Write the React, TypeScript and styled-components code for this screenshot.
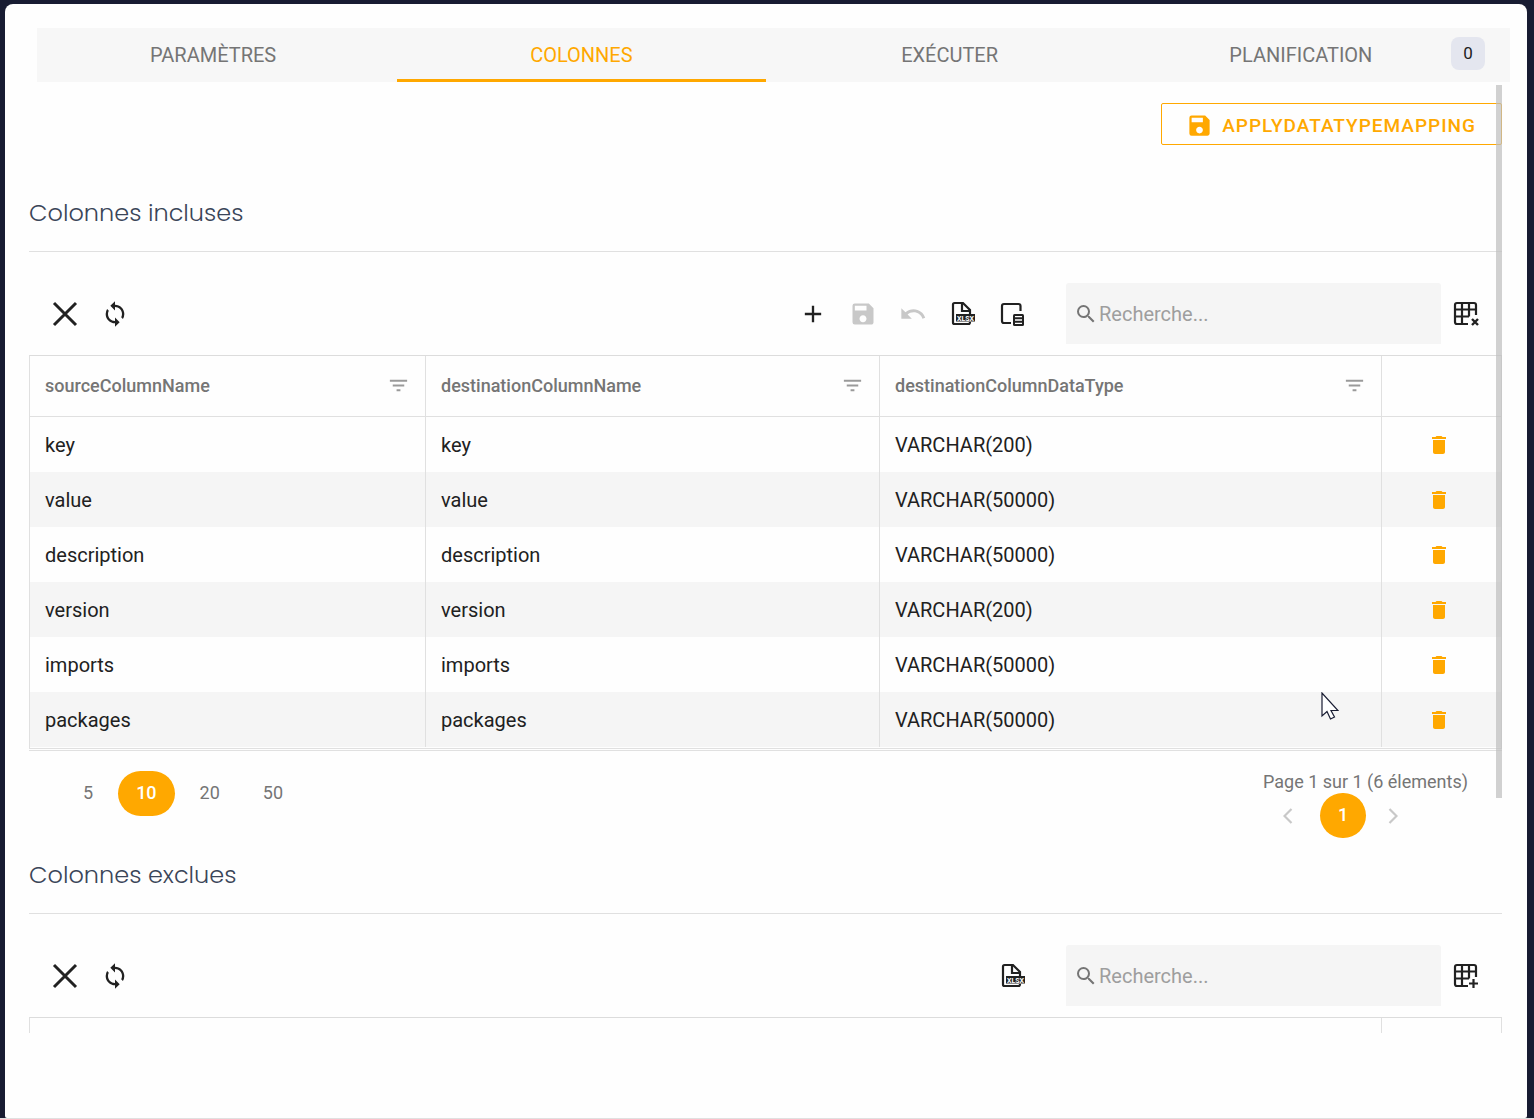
import React, { useState } from 'react';
import styled, { createGlobalStyle } from 'styled-components';
import { MdAdd, MdDelete, MdFilterList, MdSave, MdSearch, MdSync, MdUndo } from 'react-icons/md';

const ACCENT = '#ffa800';
const LINE = '#e0e0e0';
const GREY = '#757575';
const INK = '#212121';

const GlobalStyle = createGlobalStyle`
  * { box-sizing: border-box; }
  body {
    margin: 0;
    background: #181c32;
    color: ${INK};
    font-family: Roboto, "Liberation Sans", sans-serif;
    font-size: 20px;
  }
  button, input { font: inherit; color: inherit; }
  button { border: 0; padding: 0; background: none; cursor: pointer; }
`;

const Page = styled.div`
  height: 100vh;
  padding: 4px 7px 0 5px;
  border-bottom: 1px solid ${LINE};
`;

const Panel = styled.main`
  position: relative;
  height: 100%;
  display: flex;
  flex-direction: column;
  padding: 24px 25px 85px 24px;
  background: #fefefe;
  border-radius: 8px 8px 2px 2px;
`;

const TabBar = styled.div`
  flex: none;
  margin: 0 -8px 0 8px;
  background: #f7f7f7;
`;

const TabList = styled.div`
  display: grid;
  grid-template-columns: repeat(4, 1fr);
  margin: 0 8px 0 -8px;
`;

const Tab = styled.button<{ $active?: boolean; $badged?: boolean }>`
  position: relative;
  height: 54px;
  padding: 3px ${p => (p.$badged ? 34 : 0)}px 0 0;
  border-bottom: 3px solid ${p => (p.$active ? ACCENT : 'transparent')};
  color: ${p => (p.$active ? ACCENT : GREY)};
  font-size: 20px;
  text-transform: uppercase;
`;

const Badge = styled.span`
  position: absolute;
  top: 9px;
  right: 17px;
  width: 34px;
  height: 33px;
  border-radius: 8px;
  background: #e4e6ef;
  color: ${INK};
  font-size: 17px;
  line-height: 33px;
  text-align: center;
`;

const Viewport = styled.div`
  position: relative;
  flex: 1;
  min-height: 0;
`;

const Scroller = styled.div`
  height: 100%;
  overflow-y: auto;
  scrollbar-width: none;
`;

const Thumb = styled.div`
  position: absolute;
  top: 3px;
  right: 0;
  width: 6px;
  height: 75%;
  background: rgba(190, 190, 190, 0.7);
  pointer-events: none;
`;

const Actions = styled.div`
  display: flex;
  justify-content: flex-end;
  padding: 21px 0 31px;
`;

const ApplyButton = styled.button`
  display: flex;
  align-items: center;
  gap: 9px;
  height: 42px;
  padding: 2px 25px 0 24px;
  border: 1px solid ${ACCENT};
  border-radius: 2px;
  color: ${ACCENT};
  font-size: 19px;
  font-weight: 500;
  letter-spacing: 1px;
  text-transform: uppercase;
`;

const Title = styled.h2`
  margin: 0;
  padding: 21px 0 22px;
  border-bottom: 1px solid ${LINE};
  color: #3a4558;
  font-family: Poppins, Inter, sans-serif;
  font-size: 24px;
  font-weight: 300;
  line-height: 32px;
`;

const Toolbar = styled.div`
  display: flex;
  align-items: center;
  padding: 31px 11px 11px;
`;

const ToolGroup = styled.div<{ $end?: boolean }>`
  display: flex;
  margin-left: ${p => (p.$end ? 'auto' : 0)};
`;

const IconButton = styled.button`
  display: grid;
  place-items: center;
  width: 50px;
  height: 50px;
  color: ${INK};
  &:disabled { color: #c8c8c8; cursor: default; }
`;

const Search = styled.label`
  display: flex;
  align-items: center;
  gap: 1px;
  width: 375px;
  height: 61px;
  margin-left: 28px;
  padding: 0 8px;
  border-radius: 3px 3px 0 0;
  background: #f5f5f5;
  color: ${GREY};
`;

const SearchInput = styled.input`
  flex: 1;
  min-width: 0;
  padding: 0;
  border: 0;
  outline: 0;
  background: none;
  font-size: 20px;
  &::placeholder { color: #9e9e9e; opacity: 1; }
`;

const GridFrame = styled.div`
  padding-bottom: 1px;
  border: 1px solid ${LINE};
  border-top-color: #dcdcdc;
`;

const Table = styled.table`
  width: 100%;
  table-layout: fixed;
  border-collapse: separate;
  border-spacing: 0;
`;

const Col = styled.col<{ $width?: number }>`
  width: ${p => (p.$width ? `${p.$width}px` : 'auto')};
`;

const HeadCell = styled.th`
  height: 61px;
  padding: 0 15px 2px;
  border-bottom: 1px solid ${LINE};
  color: ${GREY};
  font-size: 18px;
  font-weight: 500;
  text-align: left;
  & + & { border-left: 1px solid ${LINE}; }
`;

const HeadContent = styled.div`
  display: flex;
  align-items: center;
  justify-content: space-between;
`;

const FilterButton = styled.button`
  display: grid;
  color: #9a9a9a;
`;

const Row = styled.tr`
  &:nth-child(even) { background: #f5f5f5; }
`;

const Cell = styled.td<{ $center?: boolean }>`
  height: 55px;
  padding: 0 ${p => (p.$center ? 21 : 15)}px 0 15px;
  font-size: 20px;
  & + & { border-left: 1px solid ${LINE}; }
`;

const DeleteButton = styled.button`
  display: grid;
  margin: 0 auto;
  color: ${ACCENT};
`;

const Pager = styled.div`
  display: flex;
  justify-content: space-between;
  align-items: flex-start;
  margin-top: 1px;
  padding: 20px 34px 0 36px;
  border-top: 1px solid ${LINE};
  color: ${GREY};
  font-size: 18px;
`;

const PageSizes = styled.div`
  display: flex;
  gap: 7px;
`;

const Pill = styled.button<{ $active?: boolean }>`
  min-width: 46px;
  height: 45px;
  padding: 0 18px 2px;
  border-radius: 23px;
  background: ${p => (p.$active ? ACCENT : 'transparent')};
  color: ${p => (p.$active ? '#fff' : GREY)};
  font-weight: ${p => (p.$active ? 500 : 400)};
`;

const PageInfo = styled.div`
  line-height: 22px;
`;

const PageNav = styled.nav`
  display: flex;
  gap: 7px;
`;

const Arrow = styled.button<{ $width: number }>`
  display: grid;
  place-items: center;
  width: ${p => p.$width}px;
  color: #c8c8c8;
`;

const Pointer = styled.svg`
  position: absolute;
  left: 1316px;
  top: 688px;
  pointer-events: none;
`;

const CloseIcon = () => (
  <svg width="26" height="26" viewBox="0 0 26 26" fill="none" stroke="currentColor" strokeWidth="3">
    <path d="M2 2l22 22M24 2L2 24" />
  </svg>
);

const XlsxIcon = () => (
  <svg width="26" height="26" viewBox="0 0 26 26" fill="none" stroke="currentColor" strokeWidth="2.200">
    <path d="M20 14V9L13 2H4.500Q3 2 3 3.500V21.500Q3 23 4.500 23H18.500Q20 23 20 21" />
    <path d="M12 2.500V10H20" />
    <rect x="6" y="13" width="19" height="7.500" fill="currentColor" stroke="none" />
    <text x="15.500" y="19.500" textAnchor="middle" fill="#fff" stroke="none" fontSize="7" fontWeight="700" fontFamily="Roboto, sans-serif">XLSX</text>
  </svg>
);

const ChooserIcon = () => (
  <svg width="26" height="26" viewBox="0 0 26 26" fill="none" stroke="currentColor" strokeWidth="2.200">
    <path d="M20.500 10V5Q20.500 3 18.500 3H4Q2 3 2 5V20Q2 22 4 22H11" />
    <rect x="13" y="13" width="11" height="12" rx="1.500" fill="currentColor" stroke="none" />
    <path d="M15 15.700h7M15 19h7M15 22.300h7" stroke="#fff" strokeWidth="1.300" />
  </svg>
);

const GridIcon = ({ kind }: { kind: 'remove' | 'add' }) => (
  <svg width="26" height="26" viewBox="0 0 26 26" fill="none" stroke="currentColor" strokeWidth="2.200">
    <path d="M15 23H4Q2 23 2 21V4Q2 2 4 2H21Q23 2 23 4V14M2 8.500H23M2 15.500H16M9 2V23M16 2V15.500" />
    {kind === 'add' ? <path d="M16 20.500h9M20.500 16v9" /> : <path d="M19 18l6 6M25 18l-6 6" strokeWidth="2.400" />}
  </svg>
);

const Chevron = ({ next }: { next?: boolean }) => (
  <svg width="10" height="16" viewBox="0 0 10 16" fill="none" stroke="currentColor" strokeWidth="2.200">
    <path d={next ? 'M1.500 1l7 7-7 7' : 'M8.500 1l-7 7 7 7'} />
  </svg>
);

const columns = ['sourceColumnName', 'destinationColumnName', 'destinationColumnDataType'];

const rows = [
  ['key', 'VARCHAR(200)'],
  ['value', 'VARCHAR(50000)'],
  ['description', 'VARCHAR(50000)'],
  ['version', 'VARCHAR(200)'],
  ['imports', 'VARCHAR(50000)'],
  ['packages', 'VARCHAR(50000)'],
];

const tabs = ['Paramètres', 'Colonnes', 'Exécuter', 'Planification'];

function GridToolbar({ kind, children }: { kind: 'remove' | 'add'; children: React.ReactNode }) {
  return (
    <Toolbar>
      <ToolGroup>
        <IconButton aria-label="Effacer"><CloseIcon /></IconButton>
        <IconButton aria-label="Actualiser"><MdSync size={28} /></IconButton>
      </ToolGroup>
      <ToolGroup $end>{children}</ToolGroup>
      <Search>
        <MdSearch size={24} />
        <SearchInput type="text" placeholder="Recherche..." aria-label="Recherche" />
      </Search>
      <IconButton aria-label={kind === 'add' ? 'Inclure' : 'Exclure'}><GridIcon kind={kind} /></IconButton>
    </Toolbar>
  );
}

export default function App() {
  const [active, setActive] = useState(1);
  const [size, setSize] = useState(10);
  return (
    <Page>
      <GlobalStyle />
      <Panel>
        <TabBar>
          <TabList role="tablist">
            {tabs.map((t, i) => (
              <Tab key={t} role="tab" aria-selected={i === active} $active={i === active} $badged={i === 3} onClick={() => setActive(i)}>
                {t}
                {i === 3 && <Badge>0</Badge>}
              </Tab>
            ))}
          </TabList>
        </TabBar>
        <Viewport>
          <Scroller>
            <Actions>
              <ApplyButton><MdSave size={27} />ApplyDataTypeMapping</ApplyButton>
            </Actions>
            <section>
              <Title>Colonnes incluses</Title>
              <GridToolbar kind="remove">
                <IconButton aria-label="Ajouter"><MdAdd size={28} /></IconButton>
                <IconButton aria-label="Enregistrer" disabled><MdSave size={28} /></IconButton>
                <IconButton aria-label="Annuler" disabled><MdUndo size={28} /></IconButton>
                <IconButton aria-label="Exporter"><XlsxIcon /></IconButton>
                <IconButton aria-label="Choisir les colonnes"><ChooserIcon /></IconButton>
              </GridToolbar>
              <GridFrame>
                <Table>
                  <colgroup>
                    <Col $width={395} /><Col $width={454} /><Col /><Col $width={120} />
                  </colgroup>
                  <thead>
                    <tr>
                      {columns.map(c => (
                        <HeadCell key={c}>
                          <HeadContent>
                            {c}
                            <FilterButton aria-label={`Filtrer ${c}`}><MdFilterList size={23} /></FilterButton>
                          </HeadContent>
                        </HeadCell>
                      ))}
                      <HeadCell />
                    </tr>
                  </thead>
                  <tbody>
                    {rows.map(([name, type]) => (
                      <Row key={name}>
                        <Cell>{name}</Cell>
                        <Cell>{name}</Cell>
                        <Cell>{type}</Cell>
                        <Cell $center>
                          <DeleteButton aria-label={`Supprimer ${name}`}><MdDelete size={24} /></DeleteButton>
                        </Cell>
                      </Row>
                    ))}
                  </tbody>
                </Table>
              </GridFrame>
              <Pager>
                <PageSizes>
                  {[5, 10, 20, 50].map(n => (
                    <Pill key={n} $active={n === size} onClick={() => setSize(n)}>{n}</Pill>
                  ))}
                </PageSizes>
                <div>
                  <PageInfo>Page 1 sur 1 (6 élements)</PageInfo>
                  <PageNav aria-label="Pages">
                    <Arrow $width={50} aria-label="Page précédente"><Chevron /></Arrow>
                    <Pill $active>1</Pill>
                    <Arrow $width={40} aria-label="Page suivante"><Chevron next /></Arrow>
                  </PageNav>
                </div>
              </Pager>
            </section>
            <section>
              <Title>Colonnes exclues</Title>
              <GridToolbar kind="add">
                <IconButton aria-label="Exporter"><XlsxIcon /></IconButton>
              </GridToolbar>
              <GridFrame>
                <Table>
                  <colgroup><Col /><Col $width={120} /></colgroup>
                  <thead><tr><HeadCell /><HeadCell /></tr></thead>
                </Table>
              </GridFrame>
            </section>
          </Scroller>
          <Thumb />
        </Viewport>
        <Pointer width="18" height="28" viewBox="0 0 18 28" fill="#fff" stroke="#181c32" strokeWidth="1.200">
          <path d="M1 1V24L6 19.500L9.500 27L13.500 25L10 18.500H17Z" />
        </Pointer>
      </Panel>
    </Page>
  );
}
